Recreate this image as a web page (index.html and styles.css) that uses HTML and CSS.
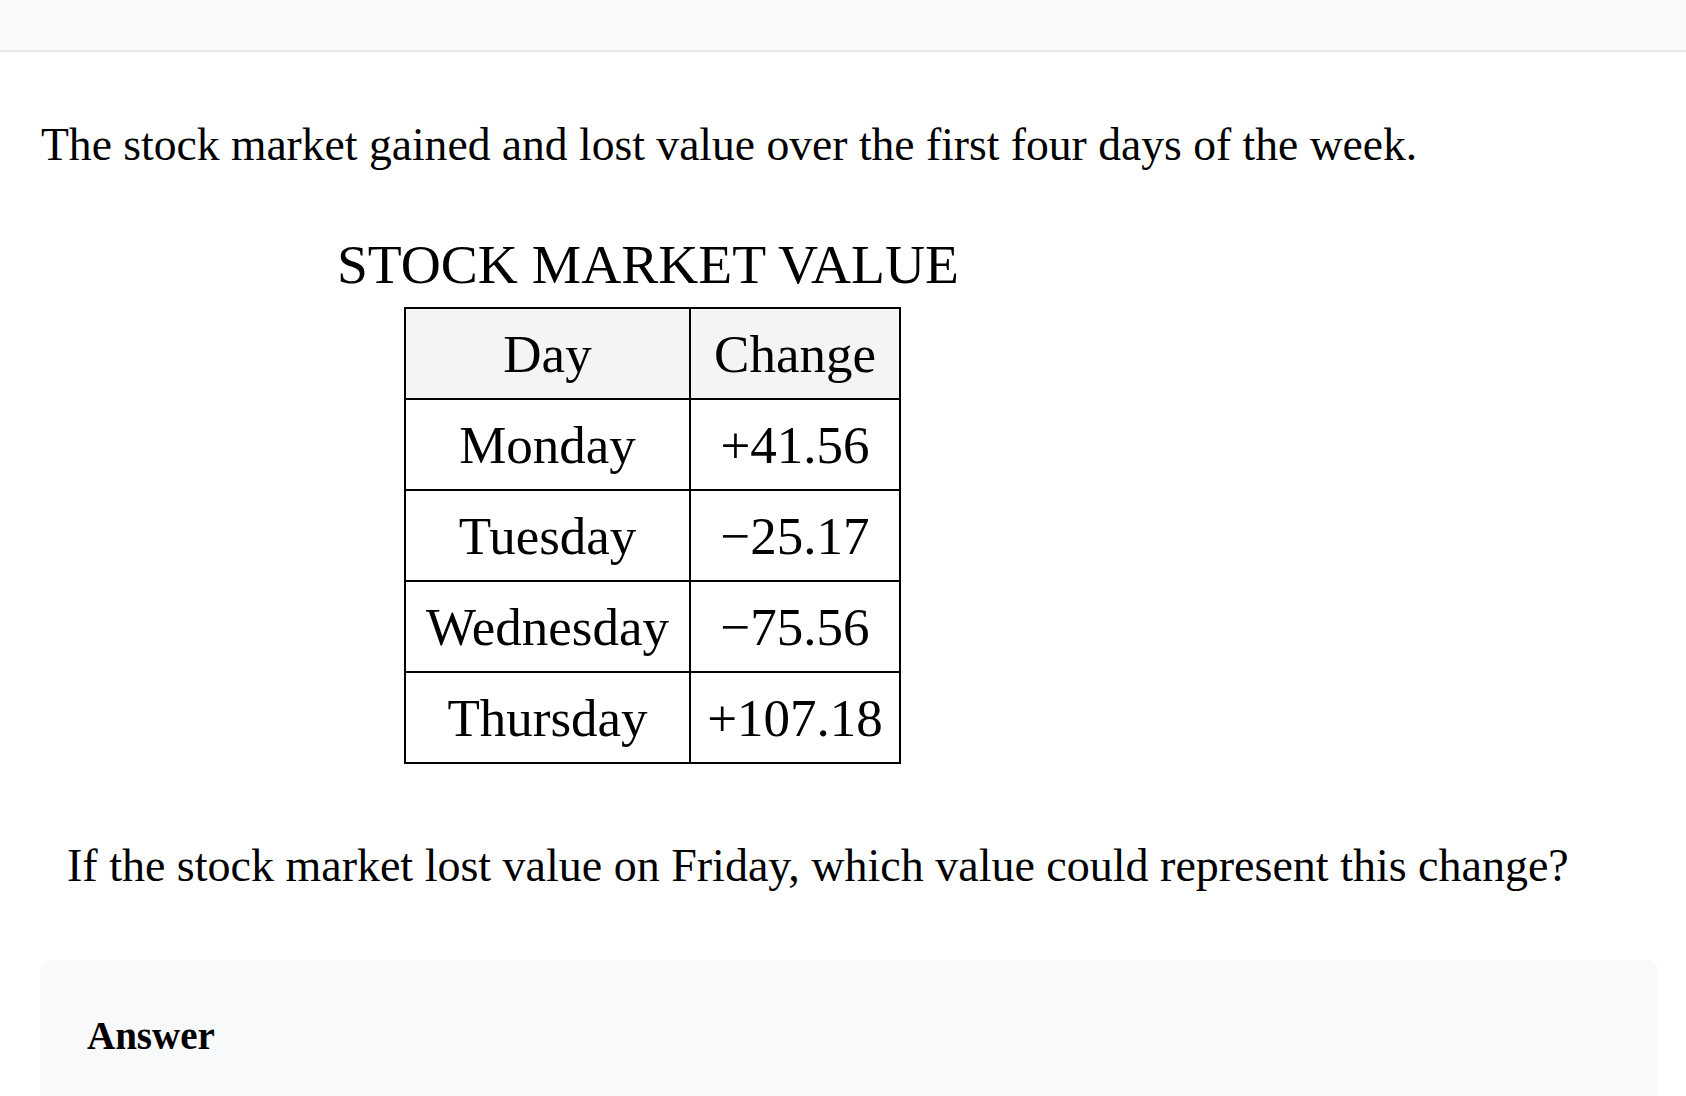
FILE: index.html
```html
<!DOCTYPE html>
<html lang="en">
<head>
<meta charset="utf-8">
<title>Stock market question</title>
<link rel="stylesheet" href="styles.css">
</head>
<body>
<header class="topbar"></header>
<main class="content">
  <p class="intro">The stock market gained and lost value over the first four days of the week.</p>
  <div class="figure">
    <div class="figure-title">STOCK MARKET VALUE</div>
    <table class="data">
      <colgroup><col class="c1"><col class="c2"></colgroup>
      <thead>
        <tr><th>Day</th><th>Change</th></tr>
      </thead>
      <tbody>
        <tr><td>Monday</td><td>+41.56</td></tr>
        <tr><td>Tuesday</td><td>−25.17</td></tr>
        <tr><td>Wednesday</td><td>−75.56</td></tr>
        <tr><td>Thursday</td><td>+107.18</td></tr>
      </tbody>
    </table>
  </div>
  <p class="question">If the stock market lost value on Friday, which value could represent this change?</p>
  <section class="answer">
    <div class="answer-label">Answer</div>
  </section>
</main>
</body>
</html>
```
FILE: styles.css
```css
html, body {
  margin: 0;
  padding: 0;
  background: #ffffff;
  color: #000000;
  font-family: "Liberation Serif", "Times New Roman", serif;
}
body {
  overflow: hidden;
}
.topbar {
  height: 50px;
  background: #f8f9fb;
  border-bottom: 2px solid #e4e6ea;
}
.content {
  padding: 0 28px 0 40px;
}
.intro {
  margin: 63px 0 0 1px;
  font-size: 45.6px;
  line-height: 60px;
}
.figure {
  display: flex;
  flex-direction: column;
  align-items: flex-start;
}
.figure-title {
  margin: 57px 0 0 297px;
  font-size: 55.5px;
  line-height: 65px;
}
.data {
  margin: 10px 0 0 364px;
  border-collapse: collapse;
  table-layout: fixed;
  width: 495px;
  font-size: 53px;
}
.data .c1 { width: 285px; }
.data .c2 { width: 210px; }
.data th, .data td {
  border: 2px solid #000;
  height: 91px;
  padding: 0 4px;
  box-sizing: border-box;
  text-align: center;
  vertical-align: middle;
  font-weight: normal;
  line-height: 60px;
  white-space: nowrap;
}
.data th {
  background: #f4f4f3;
}
.question {
  margin: 72px 0 0 27px;
  font-size: 46px;
  line-height: 60px;
}
.answer {
  margin-top: 64px;
  background: #f8f9fa;
  border-radius: 10px;
  padding: 47px 47px 60px;
  min-height: 200px;
}
.answer-label {
  font-size: 39px;
  font-weight: bold;
  line-height: 58px;
}
```
